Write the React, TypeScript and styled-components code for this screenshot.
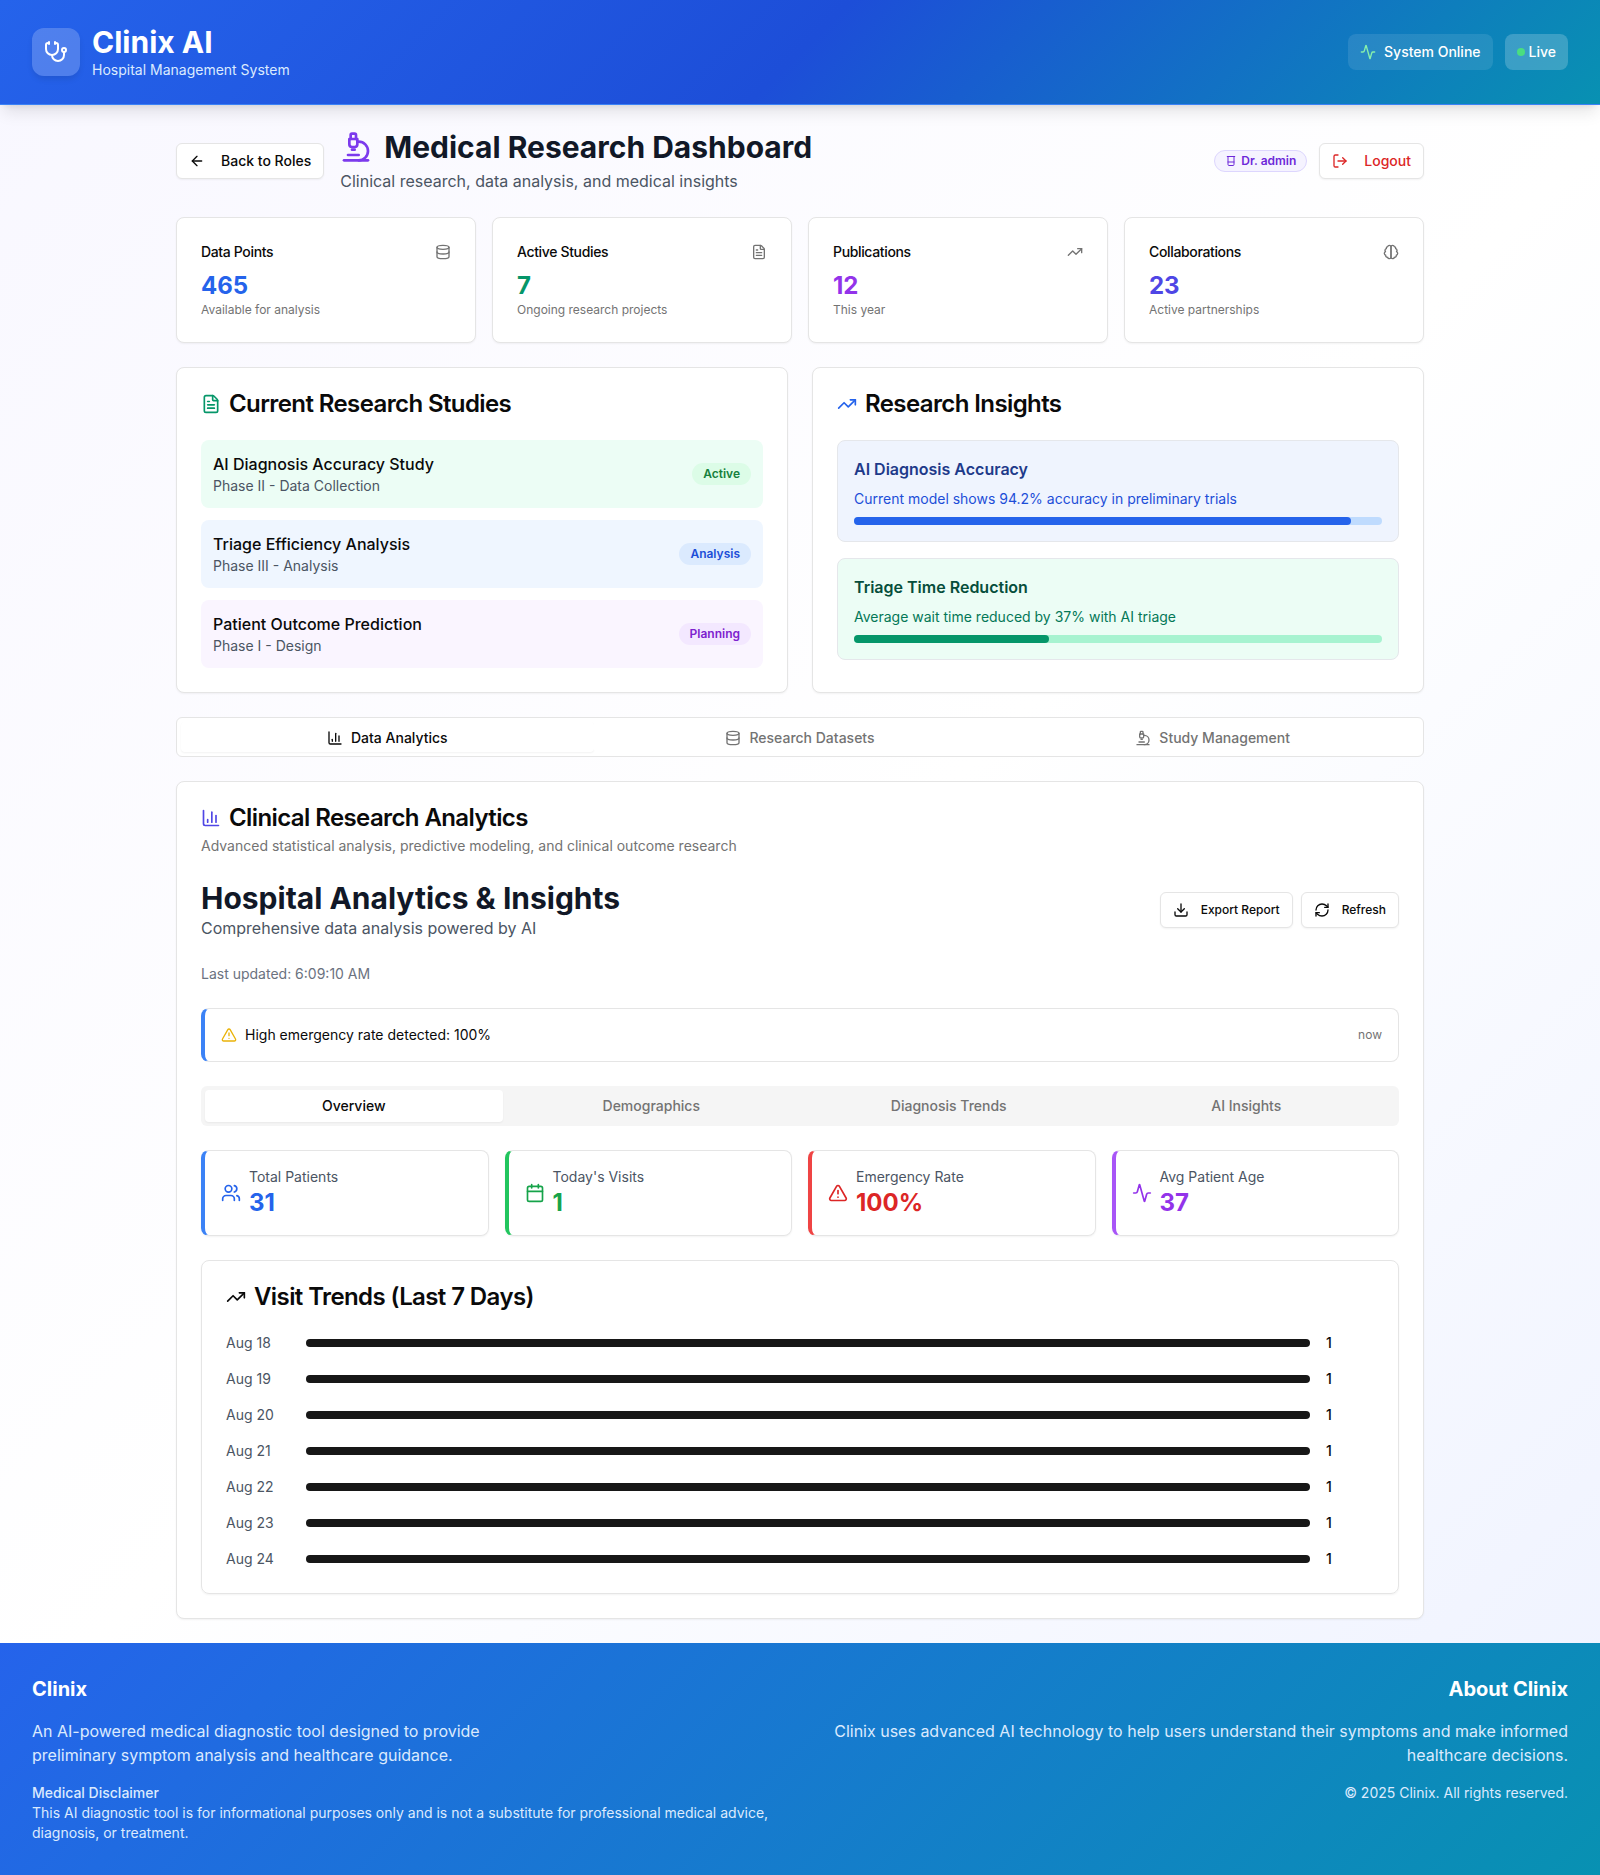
import React from 'react';
import styled, { createGlobalStyle } from 'styled-components';
import {
  Stethoscope, ArrowLeft, Microscope, LogOut, Database, FileText, TrendingUp, Activity,
  ChartColumn, Users, Calendar, TriangleAlert, Download, RefreshCw, Beaker,
} from 'lucide-react';

const Global = createGlobalStyle`
  * { box-sizing: border-box; }
  html, body { margin: 0; padding: 0; }
  body { font-family: Inter, "Liberation Sans", sans-serif; color: #0a0a0a; }
  h1, h2, h3, p { margin: 0; }
  button { font-family: inherit; }
`;

const Page = styled.div`
  min-height: 1875px;
  display: flex;
  flex-direction: column;
  background: linear-gradient(135deg, #f8f7ff 0%, #ffffff 50%, #eef2ff 100%);
`;

const gradient = 'linear-gradient(135deg, #2563eb 0%, #1d4ed8 50%, #0891b2 100%)';

const Header = styled.header`
  height: 105px;
  padding: 24px 32px;
  display: flex;
  align-items: center;
  justify-content: space-between;
  color: #fff;
  background: ${gradient};
  border-bottom: 1px solid #3b82f6;
  box-shadow: 0 10px 15px -3px rgba(0, 0, 0, 0.1), 0 4px 6px -4px rgba(0, 0, 0, 0.1);
`;
const Brand = styled.div`
  display: flex;
  align-items: center;
  gap: 12px;
`;
const LogoBox = styled.div`
  width: 48px;
  height: 48px;
  border-radius: 12px;
  display: flex;
  align-items: center;
  justify-content: center;
  background: rgba(255, 255, 255, 0.2);
  box-shadow: 0 4px 6px -1px rgba(0, 0, 0, 0.1);
`;
const BrandName = styled.h1`
  font-size: 30px;
  line-height: 36px;
  font-weight: 700;
`;
const BrandSub = styled.p`
  font-size: 14px;
  line-height: 20px;
  color: #dbeafe;
`;
const HeaderRight = styled.div`
  display: flex;
  align-items: center;
  gap: 12px;
`;
const StatusPill = styled.div<{ $strong?: boolean }>`
  height: 36px;
  padding: 0 12px;
  display: flex;
  align-items: center;
  gap: ${p => (p.$strong ? '4px' : '8px')};
  border-radius: 8px;
  font-size: 14px;
  line-height: 20px;
  font-weight: 500;
  background: rgba(255, 255, 255, ${p => (p.$strong ? 0.2 : 0.1)});
`;
const LiveDot = styled.span`
  width: 8px;
  height: 8px;
  border-radius: 50%;
  background: #4ade80;
`;

const Main = styled.main`
  width: 1280px;
  margin: 0 auto;
  padding: 24px 16px;
  flex: 1;
  display: flex;
  flex-direction: column;
  gap: 24px;
`;
const TopBar = styled.div`
  height: 64px;
  display: flex;
  align-items: center;
  justify-content: space-between;
`;
const TopLeft = styled.div`
  display: flex;
  align-items: center;
  gap: 16px;
`;
const TopRight = styled.div`
  display: flex;
  align-items: center;
  gap: 12px;
`;
const TitleRow = styled.div`
  display: flex;
  align-items: center;
  gap: 12px;
`;
const PageTitle = styled.h2`
  font-size: 30px;
  line-height: 36px;
  font-weight: 700;
  color: #111827;
`;
const PageSub = styled.p`
  margin-top: 4px;
  font-size: 16px;
  line-height: 24px;
  color: #4b5563;
`;
const Button = styled.button<{ $danger?: boolean; $small?: boolean }>`
  height: 36px;
  padding: 0 12px;
  display: inline-flex;
  align-items: center;
  gap: ${p => (p.$small ? '12px' : '16px')};
  background: #fff;
  border: 1px solid #e5e5e5;
  border-radius: 6px;
  font-size: ${p => (p.$small ? '12px' : '14px')};
  line-height: ${p => (p.$small ? '16px' : '20px')};
  font-weight: 500;
  color: ${p => (p.$danger ? '#dc2626' : '#0a0a0a')};
  box-shadow: 0 1px 2px rgba(0, 0, 0, 0.05);
`;
const UserBadge = styled.span`
  height: 22px;
  padding: 0 10px;
  display: inline-flex;
  align-items: center;
  gap: 4px;
  border-radius: 999px;
  border: 1px solid #ddd6fe;
  background: #f5f3ff;
  color: #6d28d9;
  font-size: 12px;
  line-height: 16px;
  font-weight: 600;
`;

const Card = styled.section`
  background: #fff;
  border: 1px solid #e5e5e5;
  border-radius: 8px;
  box-shadow: 0 1px 2px rgba(0, 0, 0, 0.05);
`;
const StatGrid = styled.div`
  display: grid;
  grid-template-columns: repeat(4, 1fr);
  gap: 16px;
`;
const StatCard = styled(Card)`
  padding: 24px;
  color: #0a0a0a;
`;
const StatHead = styled.div`
  display: flex;
  justify-content: space-between;
  align-items: center;
  height: 20px;
  margin-bottom: 8px;
  font-size: 14px;
  line-height: 20px;
  font-weight: 500;
  letter-spacing: -0.35px;
  color: #0a0a0a;
  svg { color: #737373; }
`;
const StatValue = styled.div<{ $color: string }>`
  font-size: 24px;
  line-height: 32px;
  font-weight: 700;
  color: ${p => p.$color};
`;
const StatNote = styled.div`
  font-size: 12px;
  line-height: 16px;
  color: #737373;
`;

const TwoCol = styled.div`
  display: grid;
  grid-template-columns: 1fr 1fr;
  gap: 24px;
`;
const PanelCard = styled(Card)`
  padding: 24px;
`;
const PanelTitle = styled.h3`
  display: flex;
  align-items: center;
  gap: 8px;
  height: 24px;
  font-size: 24px;
  line-height: 24px;
  font-weight: 600;
  letter-spacing: -0.6px;
`;
const StudyList = styled.div`
  margin-top: 24px;
  display: flex;
  flex-direction: column;
  gap: 12px;
`;
const Study = styled.div<{ $bg: string }>`
  height: 68px;
  padding: 12px;
  display: flex;
  align-items: center;
  justify-content: space-between;
  border-radius: 8px;
  background: ${p => p.$bg};
`;
const StudyName = styled.div`
  font-size: 16px;
  line-height: 24px;
  font-weight: 500;
`;
const StudyPhase = styled.div`
  font-size: 14px;
  line-height: 20px;
  color: #4b5563;
`;
const StudyBadge = styled.span<{ $bg: string; $fg: string }>`
  height: 22px;
  padding: 0 10px;
  display: inline-flex;
  align-items: center;
  border: 1px solid transparent;
  border-radius: 999px;
  background: ${p => p.$bg};
  color: ${p => p.$fg};
  font-size: 12px;
  line-height: 16px;
  font-weight: 600;
`;
const InsightList = styled.div`
  margin-top: 24px;
  display: flex;
  flex-direction: column;
  gap: 16px;
`;
const Insight = styled.div<{ $bg: string }>`
  padding: 16px;
  border: 1px solid #e5e7eb;
  border-radius: 8px;
  background: ${p => p.$bg};
`;
const InsightTitle = styled.div<{ $color: string }>`
  font-size: 16px;
  line-height: 24px;
  font-weight: 600;
  color: ${p => p.$color};
`;
const InsightText = styled.div<{ $color: string }>`
  margin-top: 8px;
  font-size: 14px;
  line-height: 20px;
  color: ${p => p.$color};
`;
const Track = styled.div<{ $color: string }>`
  margin-top: 8px;
  height: 8px;
  border-radius: 4px;
  background: ${p => p.$color};
`;
const Fill = styled.div<{ $color: string }>`
  height: 100%;
  border-radius: 4px;
  background: ${p => p.$color};
`;

const MainTabs = styled.div`
  height: 40px;
  padding: 4px;
  display: grid;
  grid-template-columns: repeat(3, 1fr);
  background: #fff;
  border: 1px solid #e5e5e5;
  border-radius: 6px;
`;
const MainTab = styled.div<{ $active?: boolean }>`
  padding-top: 2px;
  display: flex;
  align-items: center;
  justify-content: center;
  gap: 8px;
  border-radius: 4px;
  font-size: 14px;
  line-height: 20px;
  font-weight: 500;
  color: ${p => (p.$active ? '#0a0a0a' : '#737373')};
  background: #fff;
  box-shadow: ${p => (p.$active ? '0 1px 2px rgba(0,0,0,0.05)' : 'none')};
`;

const Analytics = styled(Card)`
  padding: 24px;
`;
const AnalyticsDesc = styled.p`
  margin-top: 6px;
  font-size: 14px;
  line-height: 20px;
  color: #737373;
`;
const HospitalHead = styled.div`
  margin-top: 24px;
  display: flex;
  align-items: center;
  justify-content: space-between;
`;
const HospitalTitle = styled.h2`
  font-size: 30px;
  line-height: 36px;
  font-weight: 700;
  color: #111827;
`;
const HospitalSub = styled.p`
  font-size: 16px;
  line-height: 24px;
  color: #4b5563;
`;
const HeadActions = styled.div`
  display: flex;
  gap: 8px;
`;
const Updated = styled.p`
  margin-top: 24px;
  font-size: 14px;
  line-height: 20px;
  color: #6b7280;
`;
const Alert = styled.div`
  margin-top: 24px;
  height: 54px;
  padding: 0 16px;
  display: flex;
  align-items: center;
  justify-content: space-between;
  border: 1px solid #e5e5e5;
  border-left: 4px solid #3b82f6;
  border-radius: 8px;
  font-size: 14px;
  line-height: 20px;
`;
const AlertLeft = styled.div`
  display: flex;
  align-items: center;
  gap: 8px;
`;
const AlertTime = styled.span`
  font-size: 12px;
  line-height: 16px;
  color: #737373;
`;
const SubTabs = styled.div`
  margin-top: 24px;
  height: 40px;
  padding: 4px;
  display: grid;
  grid-template-columns: repeat(4, 1fr);
  background: #f5f5f5;
  border-radius: 6px;
`;
const SubTab = styled.div<{ $active?: boolean }>`
  display: flex;
  align-items: center;
  justify-content: center;
  border-radius: 4px;
  font-size: 14px;
  line-height: 20px;
  font-weight: 500;
  color: ${p => (p.$active ? '#0a0a0a' : '#737373')};
  background: ${p => (p.$active ? '#fff' : 'transparent')};
  box-shadow: ${p => (p.$active ? '0 1px 2px rgba(0,0,0,0.05)' : 'none')};
`;
const MetricGrid = styled.div`
  margin-top: 24px;
  display: grid;
  grid-template-columns: repeat(4, 1fr);
  gap: 16px;
`;
const Metric = styled.div<{ $accent: string }>`
  height: 86px;
  padding: 16px;
  display: flex;
  align-items: center;
  gap: 8px;
  border: 1px solid #e5e5e5;
  border-left: 4px solid ${p => p.$accent};
  border-radius: 8px;
  box-shadow: 0 1px 2px rgba(0, 0, 0, 0.05);
`;
const MetricLabel = styled.div`
  font-size: 14px;
  line-height: 20px;
  color: #4b5563;
`;
const MetricValue = styled.div<{ $color: string }>`
  font-size: 24px;
  line-height: 32px;
  font-weight: 700;
  color: ${p => p.$color};
`;
const Trends = styled.div`
  margin-top: 24px;
  padding: 24px;
  border: 1px solid #e5e5e5;
  border-radius: 8px;
  box-shadow: 0 1px 2px rgba(0, 0, 0, 0.05);
`;
const TrendRows = styled.div`
  margin-top: 24px;
  display: flex;
  flex-direction: column;
  gap: 16px;
`;
const TrendRow = styled.div`
  display: flex;
  align-items: center;
  gap: 16px;
  height: 20px;
  font-size: 14px;
  line-height: 20px;
`;
const TrendLabel = styled.span`
  width: 64px;
  color: #4b5563;
`;
const TrendBar = styled.div`
  flex: 1;
  height: 8px;
  border-radius: 4px;
  background: #171717;
`;
const TrendValue = styled.span`
  width: 48px;
  font-weight: 500;
`;

const Footer = styled.footer`
  height: 232px;
  padding: 32px;
  display: grid;
  grid-template-columns: 1fr 1fr;
  gap: 32px;
  color: #fff;
  background: linear-gradient(135deg, #2563eb 0%, #0891b2 100%);
`;
const FootRight = styled.div`
  text-align: right;
`;
const FootTitle = styled.h3`
  font-size: 20px;
  line-height: 28px;
  font-weight: 700;
`;
const FootText = styled.p<{ $narrow?: boolean }>`
  margin-top: 16px;
  font-size: 16px;
  line-height: 24px;
  color: #dbeafe;
  max-width: ${p => (p.$narrow ? '448px' : 'none')};
`;
const FootSmall = styled.div`
  margin-top: 16px;
  font-size: 14px;
  line-height: 20px;
  color: #dbeafe;
`;
const FootStrong = styled.div`
  font-weight: 500;
`;

const BrainIcon = ({ size = 16 }: { size?: number }) => (
  <svg width={size} height={size} viewBox="0 0 24 24" fill="none" stroke="currentColor" strokeWidth="2" strokeLinecap="round" strokeLinejoin="round">
    <path d="M9.5 2A2.5 2.5 0 0 1 12 4.5v15a2.5 2.5 0 0 1-4.96.44 2.5 2.5 0 0 1-2.96-3.08 3 3 0 0 1-.34-5.58 2.5 2.5 0 0 1 1.32-4.24 2.5 2.5 0 0 1 1.98-3A2.5 2.5 0 0 1 9.5 2Z" />
    <path d="M14.5 2A2.5 2.5 0 0 0 12 4.5v15a2.5 2.5 0 0 0 4.96.44 2.5 2.5 0 0 0 2.96-3.08 3 3 0 0 0 .34-5.58 2.5 2.5 0 0 0-1.32-4.24 2.5 2.5 0 0 0-1.98-3A2.5 2.5 0 0 0 14.5 2Z" />
  </svg>
);

const stats = [
  { t: 'Data Points', v: '465', n: 'Available for analysis', c: '#2563eb', I: Database },
  { t: 'Active Studies', v: '7', n: 'Ongoing research projects', c: '#059669', I: FileText },
  { t: 'Publications', v: '12', n: 'This year', c: '#9333ea', I: TrendingUp },
  { t: 'Collaborations', v: '23', n: 'Active partnerships', c: '#4f46e5', I: BrainIcon },
];
const studies = [
  { t: 'AI Diagnosis Accuracy Study', s: 'Phase II - Data Collection', b: 'Active', bg: '#ecfdf5', bb: '#dcfce7', bf: '#15803d' },
  { t: 'Triage Efficiency Analysis', s: 'Phase III - Analysis', b: 'Analysis', bg: '#eff6ff', bb: '#dbeafe', bf: '#1d4ed8' },
  { t: 'Patient Outcome Prediction', s: 'Phase I - Design', b: 'Planning', bg: '#faf5ff', bb: '#f3e8ff', bf: '#7e22ce' },
];
const metrics = [
  { l: 'Total Patients', v: '31', a: '#3b82f6', c: '#2563eb', I: Users },
  { l: "Today's Visits", v: '1', a: '#22c55e', c: '#16a34a', I: Calendar },
  { l: 'Emergency Rate', v: '100%', a: '#ef4444', c: '#dc2626', I: TriangleAlert },
  { l: 'Avg Patient Age', v: '37', a: '#a855f7', c: '#9333ea', I: Activity },
];
const days = ['Aug 18', 'Aug 19', 'Aug 20', 'Aug 21', 'Aug 22', 'Aug 23', 'Aug 24'];

export default function App() {
  return (
    <Page>
      <Global />
      <Header>
        <Brand>
          <LogoBox><Stethoscope size={24} /></LogoBox>
          <div>
            <BrandName>Clinix AI</BrandName>
            <BrandSub>Hospital Management System</BrandSub>
          </div>
        </Brand>
        <HeaderRight>
          <StatusPill><Activity size={16} color="#86efac" />System Online</StatusPill>
          <StatusPill $strong><LiveDot />Live</StatusPill>
        </HeaderRight>
      </Header>
      <Main>
        <TopBar>
          <TopLeft>
            <Button><ArrowLeft size={16} />Back to Roles</Button>
            <div>
              <TitleRow>
                <Microscope size={32} color="#7c3aed" />
                <PageTitle>Medical Research Dashboard</PageTitle>
              </TitleRow>
              <PageSub>Clinical research, data analysis, and medical insights</PageSub>
            </div>
          </TopLeft>
          <TopRight>
            <UserBadge><Beaker size={12} />Dr. admin</UserBadge>
            <Button $danger><LogOut size={16} />Logout</Button>
          </TopRight>
        </TopBar>

        <StatGrid>
          {stats.map(s => (
            <StatCard key={s.t}>
              <StatHead>{s.t}<s.I size={16} /></StatHead>
              <StatValue $color={s.c}>{s.v}</StatValue>
              <StatNote>{s.n}</StatNote>
            </StatCard>
          ))}
        </StatGrid>

        <TwoCol>
          <PanelCard>
            <PanelTitle><FileText size={20} color="#059669" />Current Research Studies</PanelTitle>
            <StudyList>
              {studies.map(s => (
                <Study key={s.t} $bg={s.bg}>
                  <div>
                    <StudyName>{s.t}</StudyName>
                    <StudyPhase>{s.s}</StudyPhase>
                  </div>
                  <StudyBadge $bg={s.bb} $fg={s.bf}>{s.b}</StudyBadge>
                </Study>
              ))}
            </StudyList>
          </PanelCard>
          <PanelCard>
            <PanelTitle><TrendingUp size={20} color="#2563eb" />Research Insights</PanelTitle>
            <InsightList>
              <Insight $bg="#eff4fe">
                <InsightTitle $color="#1e3a8a">AI Diagnosis Accuracy</InsightTitle>
                <InsightText $color="#1d4ed8">Current model shows 94.2% accuracy in preliminary trials</InsightText>
                <Track $color="#bfdbfe"><Fill $color="#2563eb" style={{ width: '94.2%' }} /></Track>
              </Insight>
              <Insight $bg="#ecfdf5">
                <InsightTitle $color="#064e3b">Triage Time Reduction</InsightTitle>
                <InsightText $color="#047857">Average wait time reduced by 37% with AI triage</InsightText>
                <Track $color="#a7f3d0"><Fill $color="#059669" style={{ width: '37%' }} /></Track>
              </Insight>
            </InsightList>
          </PanelCard>
        </TwoCol>

        <MainTabs>
          <MainTab $active><ChartColumn size={16} />Data Analytics</MainTab>
          <MainTab><Database size={16} />Research Datasets</MainTab>
          <MainTab><Microscope size={16} />Study Management</MainTab>
        </MainTabs>

        <Analytics>
          <PanelTitle><ChartColumn size={20} color="#4f46e5" />Clinical Research Analytics</PanelTitle>
          <AnalyticsDesc>Advanced statistical analysis, predictive modeling, and clinical outcome research</AnalyticsDesc>
          <HospitalHead>
            <div>
              <HospitalTitle>Hospital Analytics &amp; Insights</HospitalTitle>
              <HospitalSub>Comprehensive data analysis powered by AI</HospitalSub>
            </div>
            <HeadActions>
              <Button $small><Download size={16} />Export Report</Button>
              <Button $small><RefreshCw size={16} />Refresh</Button>
            </HeadActions>
          </HospitalHead>
          <Updated>Last updated: 6:09:10 AM</Updated>
          <Alert>
            <AlertLeft><TriangleAlert size={16} color="#eab308" />High emergency rate detected: 100%</AlertLeft>
            <AlertTime>now</AlertTime>
          </Alert>
          <SubTabs>
            <SubTab $active>Overview</SubTab>
            <SubTab>Demographics</SubTab>
            <SubTab>Diagnosis Trends</SubTab>
            <SubTab>AI Insights</SubTab>
          </SubTabs>
          <MetricGrid>
            {metrics.map(m => (
              <Metric key={m.l} $accent={m.a}>
                <m.I size={20} color={m.c} />
                <div>
                  <MetricLabel>{m.l}</MetricLabel>
                  <MetricValue $color={m.c}>{m.v}</MetricValue>
                </div>
              </Metric>
            ))}
          </MetricGrid>
          <Trends>
            <PanelTitle><TrendingUp size={20} />Visit Trends (Last 7 Days)</PanelTitle>
            <TrendRows>
              {days.map(d => (
                <TrendRow key={d}>
                  <TrendLabel>{d}</TrendLabel>
                  <TrendBar />
                  <TrendValue>1</TrendValue>
                </TrendRow>
              ))}
            </TrendRows>
          </Trends>
        </Analytics>
      </Main>
      <Footer>
        <div>
          <FootTitle>Clinix</FootTitle>
          <FootText $narrow>An AI-powered medical diagnostic tool designed to provide preliminary symptom analysis and healthcare guidance.</FootText>
          <FootSmall>
            <FootStrong>Medical Disclaimer</FootStrong>
            This AI diagnostic tool is for informational purposes only and is not a substitute for professional medical advice, diagnosis, or treatment.
          </FootSmall>
        </div>
        <FootRight>
          <FootTitle>About Clinix</FootTitle>
          <FootText>Clinix uses advanced AI technology to help users understand their symptoms and make informed healthcare decisions.</FootText>
          <FootSmall>© 2025 Clinix. All rights reserved.</FootSmall>
        </FootRight>
      </Footer>
    </Page>
  );
}
